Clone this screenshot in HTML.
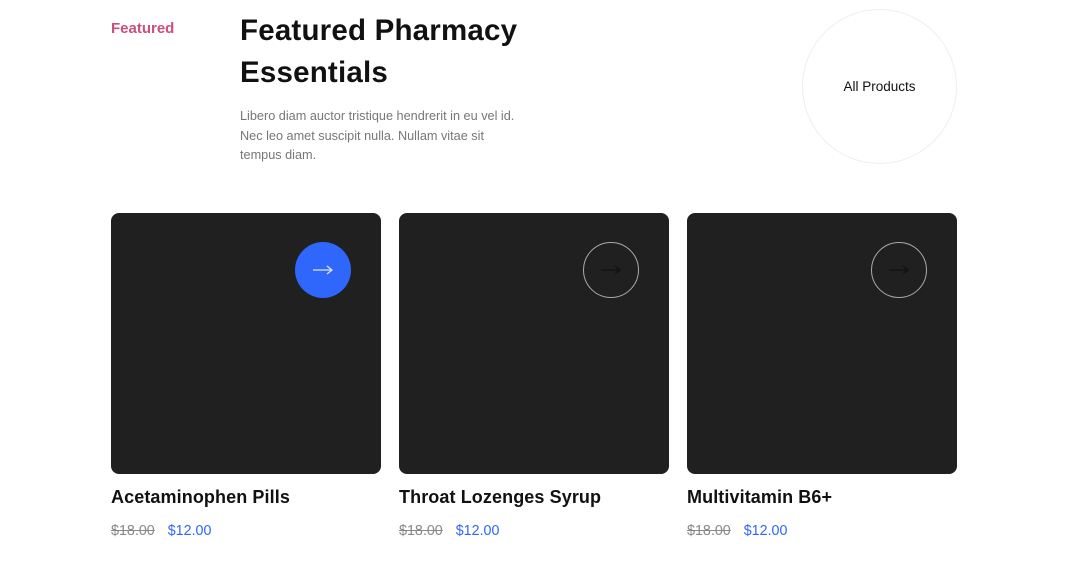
<!DOCTYPE html>
<html><head><meta charset="utf-8"><style>
*{margin:0;padding:0;box-sizing:border-box}
body{width:1066px;height:582px;background:#fff;font-family:"Liberation Sans",sans-serif;position:relative;overflow:hidden}
.tag{position:absolute;left:111px;top:20px;color:#c94f7c;font-weight:bold;font-size:15px}
h1{position:absolute;left:240px;top:10px;font-size:29.5px;font-weight:bold;line-height:42px;color:#111;letter-spacing:0.2px}
.desc{position:absolute;left:240px;top:107px;width:286px;font-size:12.7px;line-height:19.5px;color:#777}
.all{position:absolute;left:802px;top:9px;width:155px;height:155px;border:1px solid #eee;border-radius:50%;display:flex;align-items:center;justify-content:center;font-size:13.5px;color:#111}
.card{position:absolute;top:213px;width:270px;height:261px;background:#202020;border-radius:8px}
.btn{position:absolute;left:184px;top:29px;width:56px;height:56px;border-radius:50%;border:1px solid #aaa;display:flex;align-items:center;justify-content:center}
.btn.b{background:#2f66fb;border:none}
.name{position:absolute;top:487px;font-size:18px;font-weight:bold;color:#111;letter-spacing:0.1px}
.price{position:absolute;top:523px;font-size:14.3px}
.price s{color:#888;margin-right:13px}
.price span{color:#2f66fb}
</style></head><body>
<div class="tag">Featured</div>
<h1>Featured Pharmacy<br>Essentials</h1>
<div class="desc">Libero diam auctor tristique hendrerit in eu vel id. Nec leo amet suscipit nulla. Nullam vitae sit tempus diam.</div>
<div class="all">All Products</div>

<div class="card" style="left:111px"><div class="btn b"><svg width="20" height="10" viewBox="0 0 20 10"><path d="M0 5H19M14 1L19 5L14 9" stroke="#dfe6ff" stroke-width="1.3" fill="none"/></svg></div></div>
<div class="card" style="left:399px"><div class="btn"><svg width="20" height="10" viewBox="0 0 20 10"><path d="M0 5H19M14 1L19 5L14 9" stroke="#111" stroke-width="1.3" fill="none"/></svg></div></div>
<div class="card" style="left:687px"><div class="btn"><svg width="20" height="10" viewBox="0 0 20 10"><path d="M0 5H19M14 1L19 5L14 9" stroke="#111" stroke-width="1.3" fill="none"/></svg></div></div>

<div class="name" style="left:111px">Acetaminophen Pills</div>
<div class="name" style="left:399px">Throat Lozenges Syrup</div>
<div class="name" style="left:687px">Multivitamin B6+</div>
<div class="price" style="left:111px"><s>$18.00</s><span>$12.00</span></div>
<div class="price" style="left:399px"><s>$18.00</s><span>$12.00</span></div>
<div class="price" style="left:687px"><s>$18.00</s><span>$12.00</span></div>
</body></html>
